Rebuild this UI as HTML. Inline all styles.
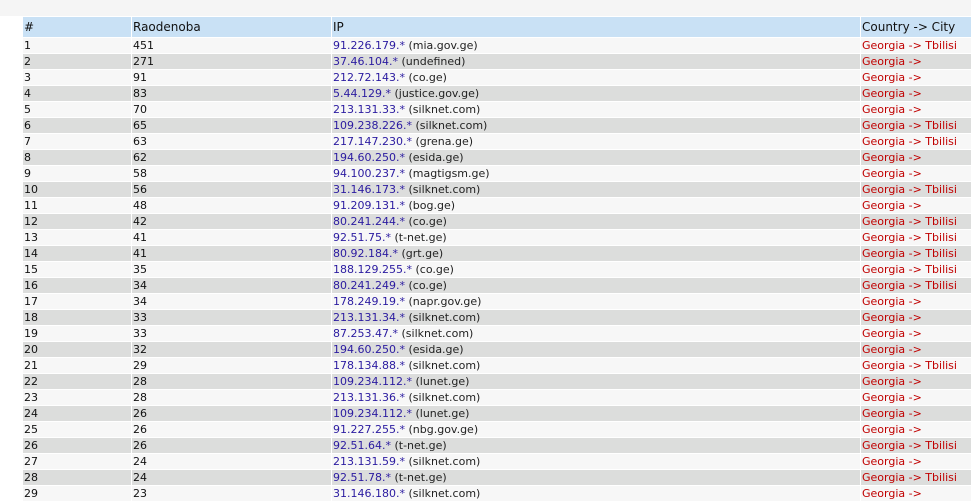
<!DOCTYPE html>
<html><head><meta charset="utf-8"><style>
html,body{margin:0;padding:0;background:#fff;width:971px;height:499px;overflow:hidden}
.wrap{position:absolute;left:0;top:0;width:1200px}
.top{position:absolute;left:0;top:0;width:971px;height:16px;background:#f5f5f5}
table{position:absolute;left:22px;top:16px;width:955px;table-layout:fixed;border-collapse:separate;border-spacing:1px;background:#fff;font-family:"DejaVu Sans","Liberation Sans",sans-serif;font-size:11px;color:#111}
td,th{padding:0 0 0 1px;white-space:nowrap;overflow:hidden;text-align:left;font-weight:normal;height:15px;line-height:15px}
th{background:#c9e1f5;height:20px;line-height:20px;font-size:12px}
tr:nth-child(even) td{background:#f7f7f7}
tr:nth-child(odd) td{background:#dcdddc}
.ip{color:#2a1aa0}.ip span{color:#222}
.c{color:#c00000}
</style></head><body>
<div class="wrap">
<div class="top"></div>
<table>
<colgroup><col style="width:108px"><col style="width:199px"><col style="width:528px"><col style="width:115px"></colgroup>
<tr><th>#</th><th>Raodenoba</th><th>IP</th><th>Country -&gt; City</th></tr>
<tr><td>1</td><td>451</td><td class="ip">91.226.179.* <span>(mia.gov.ge)</span></td><td class="c">Georgia -&gt; Tbilisi</td></tr>
<tr><td>2</td><td>271</td><td class="ip">37.46.104.* <span>(undefined)</span></td><td class="c">Georgia -&gt;</td></tr>
<tr><td>3</td><td>91</td><td class="ip">212.72.143.* <span>(co.ge)</span></td><td class="c">Georgia -&gt;</td></tr>
<tr><td>4</td><td>83</td><td class="ip">5.44.129.* <span>(justice.gov.ge)</span></td><td class="c">Georgia -&gt;</td></tr>
<tr><td>5</td><td>70</td><td class="ip">213.131.33.* <span>(silknet.com)</span></td><td class="c">Georgia -&gt;</td></tr>
<tr><td>6</td><td>65</td><td class="ip">109.238.226.* <span>(silknet.com)</span></td><td class="c">Georgia -&gt; Tbilisi</td></tr>
<tr><td>7</td><td>63</td><td class="ip">217.147.230.* <span>(grena.ge)</span></td><td class="c">Georgia -&gt; Tbilisi</td></tr>
<tr><td>8</td><td>62</td><td class="ip">194.60.250.* <span>(esida.ge)</span></td><td class="c">Georgia -&gt;</td></tr>
<tr><td>9</td><td>58</td><td class="ip">94.100.237.* <span>(magtigsm.ge)</span></td><td class="c">Georgia -&gt;</td></tr>
<tr><td>10</td><td>56</td><td class="ip">31.146.173.* <span>(silknet.com)</span></td><td class="c">Georgia -&gt; Tbilisi</td></tr>
<tr><td>11</td><td>48</td><td class="ip">91.209.131.* <span>(bog.ge)</span></td><td class="c">Georgia -&gt;</td></tr>
<tr><td>12</td><td>42</td><td class="ip">80.241.244.* <span>(co.ge)</span></td><td class="c">Georgia -&gt; Tbilisi</td></tr>
<tr><td>13</td><td>41</td><td class="ip">92.51.75.* <span>(t-net.ge)</span></td><td class="c">Georgia -&gt; Tbilisi</td></tr>
<tr><td>14</td><td>41</td><td class="ip">80.92.184.* <span>(grt.ge)</span></td><td class="c">Georgia -&gt; Tbilisi</td></tr>
<tr><td>15</td><td>35</td><td class="ip">188.129.255.* <span>(co.ge)</span></td><td class="c">Georgia -&gt; Tbilisi</td></tr>
<tr><td>16</td><td>34</td><td class="ip">80.241.249.* <span>(co.ge)</span></td><td class="c">Georgia -&gt; Tbilisi</td></tr>
<tr><td>17</td><td>34</td><td class="ip">178.249.19.* <span>(napr.gov.ge)</span></td><td class="c">Georgia -&gt;</td></tr>
<tr><td>18</td><td>33</td><td class="ip">213.131.34.* <span>(silknet.com)</span></td><td class="c">Georgia -&gt;</td></tr>
<tr><td>19</td><td>33</td><td class="ip">87.253.47.* <span>(silknet.com)</span></td><td class="c">Georgia -&gt;</td></tr>
<tr><td>20</td><td>32</td><td class="ip">194.60.250.* <span>(esida.ge)</span></td><td class="c">Georgia -&gt;</td></tr>
<tr><td>21</td><td>29</td><td class="ip">178.134.88.* <span>(silknet.com)</span></td><td class="c">Georgia -&gt; Tbilisi</td></tr>
<tr><td>22</td><td>28</td><td class="ip">109.234.112.* <span>(lunet.ge)</span></td><td class="c">Georgia -&gt;</td></tr>
<tr><td>23</td><td>28</td><td class="ip">213.131.36.* <span>(silknet.com)</span></td><td class="c">Georgia -&gt;</td></tr>
<tr><td>24</td><td>26</td><td class="ip">109.234.112.* <span>(lunet.ge)</span></td><td class="c">Georgia -&gt;</td></tr>
<tr><td>25</td><td>26</td><td class="ip">91.227.255.* <span>(nbg.gov.ge)</span></td><td class="c">Georgia -&gt;</td></tr>
<tr><td>26</td><td>26</td><td class="ip">92.51.64.* <span>(t-net.ge)</span></td><td class="c">Georgia -&gt; Tbilisi</td></tr>
<tr><td>27</td><td>24</td><td class="ip">213.131.59.* <span>(silknet.com)</span></td><td class="c">Georgia -&gt;</td></tr>
<tr><td>28</td><td>24</td><td class="ip">92.51.78.* <span>(t-net.ge)</span></td><td class="c">Georgia -&gt; Tbilisi</td></tr>
<tr><td>29</td><td>23</td><td class="ip">31.146.180.* <span>(silknet.com)</span></td><td class="c">Georgia -&gt;</td></tr>
</table>
</div>
</body></html>
